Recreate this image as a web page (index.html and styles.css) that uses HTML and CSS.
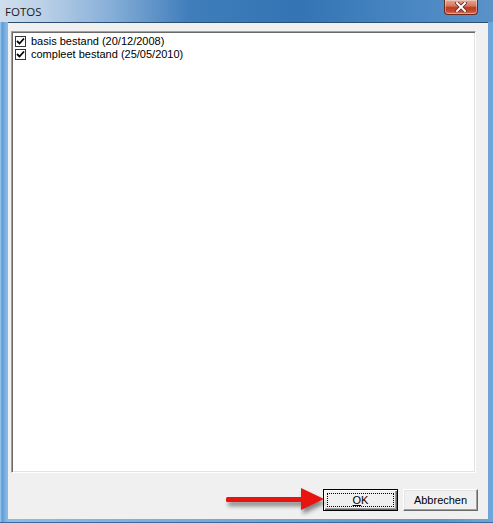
FILE: index.html
```html
<!DOCTYPE html>
<html>
<head>
<meta charset="utf-8">
<title>FOTOS</title>
<link rel="stylesheet" href="styles.css">
</head>
<body>
<div class="window">
  <div class="titlebar">
    <span class="title">FOTOS</span>
    <div class="close">
      <svg width="12" height="10" viewBox="0 0 12 10">
        <path d="M2 1 L10 9 M10 1 L2 9" stroke="#5a2a22" stroke-width="3.6" stroke-linecap="square"/>
        <path d="M2 1 L10 9 M10 1 L2 9" stroke="#ffffff" stroke-width="2" stroke-linecap="square"/>
      </svg>
    </div>
  </div>
  <div class="client">
    <div class="listbox">
      <div class="item">
        <span class="check"><svg width="9" height="9" viewBox="0 0 9 9"><path d="M1 4 L3.5 6.5 L8 1.5" fill="none" stroke="#000" stroke-width="1.8"/></svg></span>
        <span class="label">basis bestand (20/12/2008)</span>
      </div>
      <div class="item">
        <span class="check"><svg width="9" height="9" viewBox="0 0 9 9"><path d="M1 4 L3.5 6.5 L8 1.5" fill="none" stroke="#000" stroke-width="1.8"/></svg></span>
        <span class="label">compleet bestand (25/05/2010)</span>
      </div>
    </div>
    <div class="buttons">
      <button class="btn default"><span class="focus"><u>O</u>K</span></button>
      <button class="btn">Abbrechen</button>
    </div>
  </div>
  <svg class="arrow" width="110" height="34" viewBox="0 0 110 34">
    <rect x="6" y="13" width="80" height="5" rx="1.5" fill="#e8140f"/>
    <polygon points="81,4 104,15 81,26" fill="#e8140f"/>
  </svg>
</div>
</body>
</html>
```

FILE: styles.css
```css
html, body {
  margin: 0;
  padding: 0;
  background: #6fa6da;
}

.window {
  position: relative;
  width: 493px;
  height: 523px;
  display: flex;
  flex-direction: column;
  box-sizing: border-box;
  background: linear-gradient(to right, #a9cdee 0, #5b9bd6 2px, #79b0e2 5px, #8cbbe6 8px, #5c95cc 90%, #6ea6da 100%);
  box-shadow: inset 0 -1px 0 #3a6a9a;
  overflow: hidden;
}

.titlebar {
  height: 22px;
  flex: none;
  display: flex;
  align-items: flex-start;
  padding-left: 5px;
  background: linear-gradient(to right, #cfdeed 0, #bcd2e8 40px, #87afd8 110px, #3f7dbb 190px, #3474b4 300px, #4785c2 400px, #5a92c8 493px);
}

.title {
  font-family: "Open Sans", "Liberation Sans", sans-serif;
  font-size: 11.5px;
  line-height: 15px;
  padding-top: 4px;
  color: #1a1a1a;
}

.close {
  margin-left: auto;
  margin-right: 15px;
  width: 34px;
  height: 15px;
  box-sizing: border-box;
  border: 1px solid #6a2a20;
  border-top: none;
  border-radius: 0 0 4px 4px;
  background: linear-gradient(to bottom, #e4a796 0, #d77a62 40%, #bf3b22 55%, #c64a30 80%, #d97a5e 100%);
  box-shadow: inset 0 0 0 1px rgba(255, 255, 255, 0.35);
  display: flex;
  align-items: center;
  justify-content: center;
}

.client {
  flex: 1;
  margin: 0 5px 4px 8px;
  border-top: 1px solid #2c4f74;
  background: #f0f0f0;
  padding: 8px 12px 0 3px;
  display: flex;
  flex-direction: column;
}

.listbox {
  height: 442px;
  box-sizing: border-box;
  background: #ffffff;
  border: 1px solid;
  border-color: #a0a0a0 #ffffff #ffffff #a0a0a0;
  box-shadow: inset 1px 1px 0 #696969, inset -1px -1px 0 #e3e3e3;
  padding: 3px 0 0 3px;
  font-family: "Liberation Sans", Arial, sans-serif;
  font-size: 11px;
  color: #000;
}

.item {
  height: 13px;
  display: flex;
  align-items: center;
  gap: 5px;
}

.check {
  width: 11px;
  height: 11px;
  box-sizing: border-box;
  border: 1px solid #333;
  background: #fff;
  display: flex;
  align-items: center;
  justify-content: center;
}

.label {
  line-height: 13px;
  white-space: nowrap;
}

.buttons {
  margin-top: 16px;
  margin-right: -2px;
  display: flex;
  justify-content: flex-end;
  gap: 5px;
}

.btn {
  width: 75px;
  height: 22px;
  box-sizing: border-box;
  margin: 0;
  padding: 0;
  background: #f0f0f0;
  font-family: "Liberation Sans", Arial, sans-serif;
  font-size: 11px;
  color: #000;
  border: 1px solid;
  border-color: #ffffff #696969 #696969 #ffffff;
  box-shadow: inset -1px -1px 0 #a0a0a0, inset 1px 1px 0 #e3e3e3;
  display: flex;
  align-items: center;
  justify-content: center;
}

.btn.default {
  border: 1px solid #000;
  box-shadow: inset 1px 1px 0 #ffffff, inset -1px -1px 0 #696969, inset -2px -2px 0 #a0a0a0;
  padding: 3px;
}

.focus {
  flex: 1;
  align-self: stretch;
  border: 1px dotted #000;
  display: flex;
  align-items: center;
  justify-content: center;
}

.arrow {
  position: absolute;
  left: 220px;
  top: 484px;
  filter: drop-shadow(2px 4px 2px rgba(0, 0, 0, 0.45));
}
```
